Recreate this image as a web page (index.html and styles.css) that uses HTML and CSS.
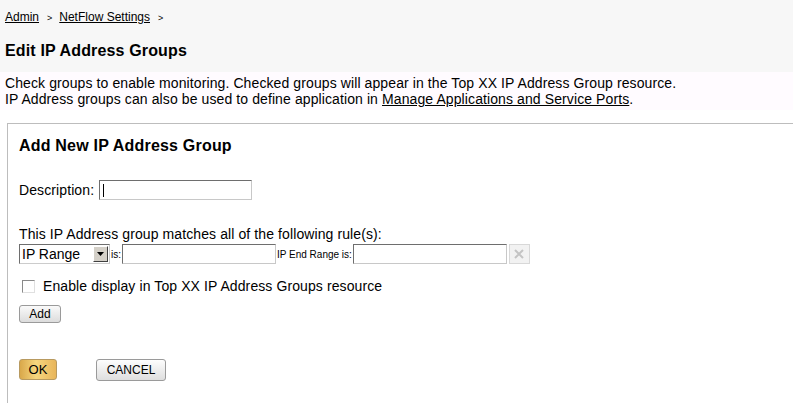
FILE: index.html
```html
<!DOCTYPE html>
<html>
<head>
<meta charset="utf-8">
<link rel="stylesheet" href="styles.css">
</head>
<body>
<div class="header">
  <div class="crumbs"><a href="#">Admin</a><span class="sep">&gt;</span><a href="#">NetFlow Settings</a><span class="sep">&gt;</span></div>
  <h1 class="title">Edit IP Address Groups</h1>
</div>
<div class="intro">
  <div>Check groups to enable monitoring. Checked groups will appear in the Top XX IP Address Group resource.</div>
  <div>IP Address groups can also be used to define application in <a href="#">Manage Applications and Service Ports</a>.</div>
</div>
<div class="panel">
  <h2 class="panel-title">Add New IP Address Group</h2>
  <div class="desc-row"><span>Description:</span><span class="field desc-field"><span class="caret"></span></span></div>
  <div class="rule-label">This IP Address group matches all of the following rule(s):</div>
  <div class="rule-row">
    <span class="select"><span class="select-text">IP Range</span><span class="select-btn"><svg width="9" height="5" viewBox="0 0 9 5"><path d="M1 0h7L4.5 4z" fill="#000"/></svg></span></span>
    <span class="small">is:</span>
    <span class="field ip-field"></span>
    <span class="small">IP End Range is:</span>
    <span class="field ip-field"></span>
    <span class="xbtn"><svg width="12" height="12" viewBox="0 0 12 12"><path d="M2 2l8 8M10 2l-8 8" stroke="#c4c4c4" stroke-width="2"/></svg></span>
  </div>
  <div class="check-row"><span class="checkbox"></span><span>Enable display in Top XX IP Address Groups resource</span></div>
  <div class="add-row"><span class="btn add-btn">Add</span></div>
  <div class="actions"><span class="btn ok-btn">OK</span><span class="btn cancel-btn">CANCEL</span></div>
</div>
</body>
</html>
```
FILE: styles.css
```css
html, body { margin: 0; padding: 0; background: #fff; }
body { font-family: "Liberation Sans", Arial, sans-serif; font-size: 12px; color: #000; width: 793px; height: 403px; overflow: hidden; }
a { color: #000; text-decoration: underline; }
.header { background: #f7f7f7; padding: 10px 5px 0; height: 62px; box-sizing: content-box; }
.crumbs { font-size: 12px; line-height: 14px; }
.sep { font-size: 9px; margin: 0 7px 0 8px; }
.title { font-size: 16px; letter-spacing: 0.15px; font-weight: bold; margin: 17px 0 0; line-height: 18px; }
.intro { background: #fffbff; padding: 3px 5px 6px; font-size: 14px; letter-spacing: 0.1px; line-height: 16px; height: 29px; }
.panel { margin: 13px 0 0 7px; border-left: 1px solid #bdbdbd; border-top: 1px solid #bdbdbd; padding: 12px 0 0 11px; height: 267px; }
.panel-title { font-size: 16px; letter-spacing: 0.2px; font-weight: bold; margin: 0; line-height: 20px; }
.desc-row { display: flex; align-items: center; margin-top: 24px; font-size: 14px; letter-spacing: 0.1px; gap: 5px; }
.field { display: inline-block; box-sizing: border-box; height: 20px; border: 1px solid #c8c8c8; border-top-color: #6e6e6e; border-left-color: #6e6e6e; background: #fff; position: relative; }
.desc-field { width: 153px; }
.caret { position: absolute; left: 3px; top: 3px; width: 1px; height: 13px; background: #000; }
.rule-label { margin-top: 26px; font-size: 14px; letter-spacing: 0.1px; line-height: 16px; }
.rule-row { display: flex; align-items: center; margin-top: 2px; height: 20px; }
.select { display: inline-flex; align-items: center; box-sizing: border-box; width: 91px; height: 20px; border: 1px solid #6e6e6e; border-right-color: #ccc; border-bottom-color: #ccc; background: #fff; font-size: 14px; }
.select-text { flex: 1; padding-left: 2px; }
.select-btn { display: flex; align-items: center; justify-content: center; width: 15px; height: 16px; margin-right: 1px; background: #d4d0c8; border: 1px solid; border-color: #fff #404040 #404040 #fff; box-sizing: border-box; }
.small { font-size: 10px; margin: 0 1px 0 1px; }
.ip-field { width: 154px; }
.xbtn { display: flex; align-items: center; justify-content: center; width: 21px; height: 20px; margin-left: 2px; box-sizing: border-box; border: 1px solid #d8d8d8; background: #f2f2f2; }
.check-row { display: flex; align-items: center; margin-top: 14px; font-size: 14px; letter-spacing: 0.1px; }
.checkbox { width: 11px; height: 11px; border: 1px solid #8a8a8a; border-right-color: #e0e0e0; border-bottom-color: #e0e0e0; margin: 0 8px 0 3px; background: #fff; }
.add-row { margin-top: 11px; }
.btn { display: inline-flex; align-items: center; justify-content: center; box-sizing: border-box; font-size: 12px; border-radius: 3px; border: 1px solid #9a9a9a; }
.add-btn { width: 42px; height: 18px; background: linear-gradient(#fafafa, #dcdcdc); }
.actions { display: flex; gap: 39px; margin-top: 36px; }
.ok-btn { width: 38px; height: 21px; background: linear-gradient(90deg, #d9a84a, #f6d67e 45%, #e8b55a); border-color: #b89a60; font-size: 13px; }
.cancel-btn { width: 70px; height: 22px; background: linear-gradient(#fdfdfd, #dedede); font-size: 12px; }
```
